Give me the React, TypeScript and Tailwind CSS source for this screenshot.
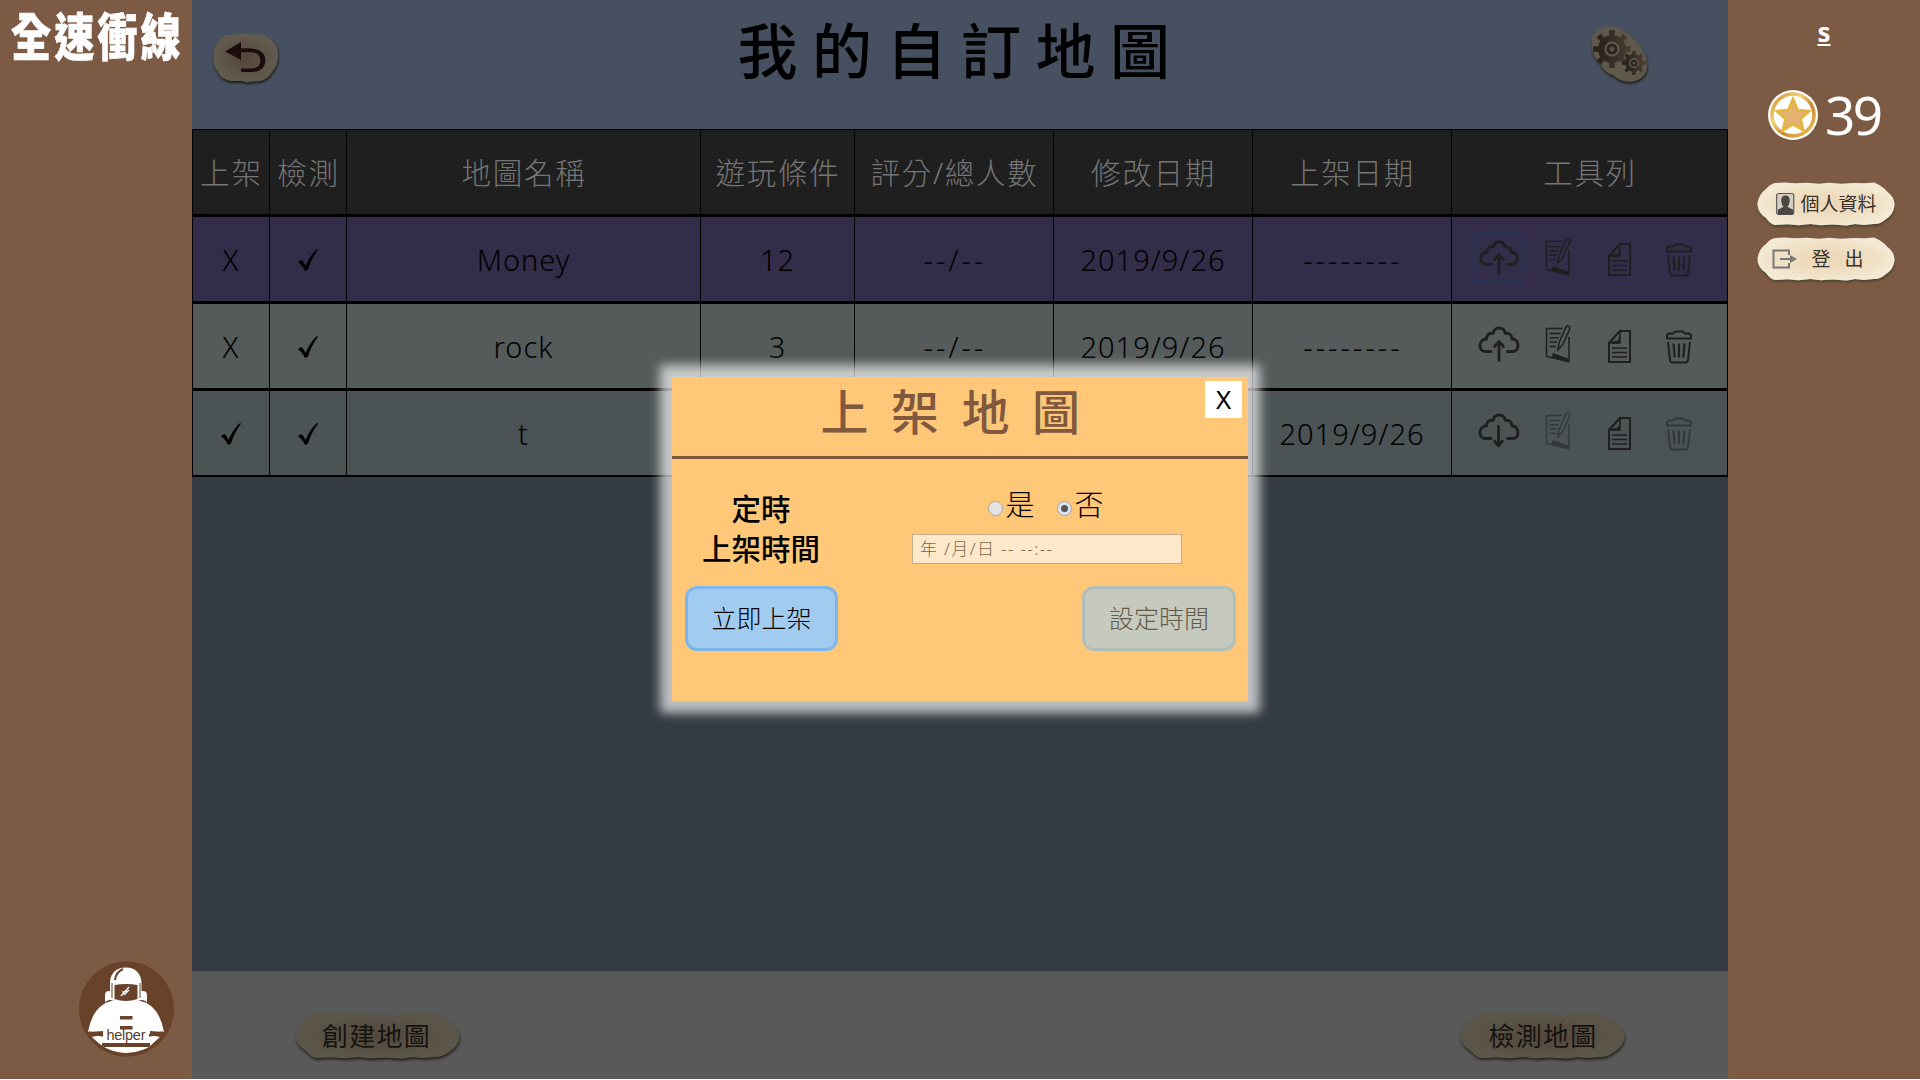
import React from "react";

const CJK = "font-['Noto_Sans','Noto_Sans_CJK_TC',sans-serif]";

function Cloud({ down }: { down?: boolean }) {
  return (
    <svg viewBox="0 0 48 48" className="size-12" fill="none" stroke="#1f1f1f" strokeWidth="2.9" strokeLinecap="round" strokeLinejoin="round">
      <path d="M16 29.500H11a5.500 5.500 0 0 1-6-6c0-4 3-6.500 6.500-6.500 0-5 4-6.500 6.500-5.500 1-4 3.500-5.500 6-5.500s5.500 1.500 6.500 5.500c4-1 6.500 2 6.500 5.500 4 0 6 3 6 6.500 0 4-2.500 6-5.500 6h-5" />
      {down ? (
        <path d="M23.500 17v18M19.500 32l4 5 4-5" strokeWidth="2.700" />
      ) : (
        <path d="M24 38.500V21M19.500 24.500l4.500-5 4.500 5" strokeWidth="2.700" />
      )}
    </svg>
  );
}

function Edit() {
  return (
    <svg viewBox="0 0 28 40" className="h-10 w-7" fill="none" stroke="#1f1f1f">
      <path d="M18.500 4.500H2.500V32.500L25 37.500V13" strokeWidth="1.500" />
      <path d="M9 29l16 6v3.500L7.500 33.500z" fill="#1f1f1f" stroke="none" />
      <path d="M5.500 9.500h11M5.500 13.800h9M5.500 18h7.500M5.500 22.500h6.500" strokeWidth="1.500" />
      <path d="M14 25.500l1-6.500 7-16q1.700-2 3.700 0v2L18.500 21z" strokeWidth="1.500" />
    </svg>
  );
}

function Doc() {
  return (
    <svg viewBox="0 0 24 36" className="h-9 w-6" fill="none" stroke="#1f1f1f" strokeWidth="2">
      <path d="M12 2h10v31H1V14z" />
      <path d="M12 2v12H1z" strokeWidth="1.500" />
      <path d="M12 5v9.500H4v-2l6-1z" fill="#1f1f1f" stroke="none" />
      <path d="M4 19h15M4 23.500h15M4 28h15" strokeWidth="1.500" />
    </svg>
  );
}

function Trash() {
  return (
    <svg viewBox="0 0 28 36" className="h-9 w-7" fill="none" stroke="#1f1f1f" strokeWidth="2" strokeLinejoin="round">
      <path d="M2 9.500V7q0-2.500 3-2.500h3.500L10 2.500h8l1.500 2H23q3 0 3 2.500v2.500z" />
      <path d="M3 13l2 18q.300 2.500 2.500 2.500h13q2.200 0 2.500-2.500l2-18" />
      <path d="M8.500 14.500l1.200 14M14 14.500v14M19.500 14.500l-1.200 14" strokeWidth="2.200" />
    </svg>
  );
}

const Check = () => (
  <svg viewBox="0 0 22 24" className="h-6 w-[22px]">
    <path d="M1 14.500q2.500-3.500 4.500-1.500 1.500 1.500 3 5Q13 7 20 1l1 .700Q14.500 10 11 21.500L8 23Q5 16.500 1 14.500z" fill="#000" />
  </svg>
);

function Pill({ w, h, dark, children }: { w: string; h: string; dark?: boolean; children: React.ReactNode }) {
  return (
    <div className={`relative flex items-center justify-center ${w} ${h}`}>
      <svg viewBox="0 0 138 44" preserveAspectRatio="none" className="absolute inset-0 size-full overflow-visible">
        <defs>
          <radialGradient id={dark ? "pd" : "pl"}>
            <stop offset="0" stopColor={dark ? "#53493e" : "#ecd6b4"} />
            <stop offset=".75" stopColor={dark ? "#5a5246" : "#f0e1c6"} />
            <stop offset="1" stopColor={dark ? "#5b554a" : "#f3e9d4"} />
          </radialGradient>
          <filter id={dark ? "sd" : "sl"} x="-10%" y="-20%" width="120%" height="150%">
            <feDropShadow dx="0.500" dy="2" stdDeviation="1" floodColor={dark ? "#1e1c12" : "#45432a"} floodOpacity="0.900" />
          </filter>
        </defs>
        <path
          filter={dark ? "url(#sd)" : "url(#sl)"}
          fill={dark ? "url(#pd)" : "url(#pl)"}
          d="M18 1l10-.500 10 .800 12-.500 12 .900 10-.900 12 1 13-.800 11 .300 9-.800q8 3 13 9 8 6 7.500 14-1 9-9 14-6 5-12 4.500l-10 1-8-1-9 1.500-14-1-12 .800-10-1.200-12 1.200-11-1-12 .800Q14 43 9 36 0 30 .500 21 2 12 9 7q4-5 9-6z"
        />
      </svg>
      <div className="relative flex items-center">{children}</div>
    </div>
  );
}

function gear(cx: number, cy: number, r: number) {
  const pts: string[] = [];
  for (let i = 0; i < 8; i++) {
    for (const [o, k] of [[-0.2, 1], [0.2, 1], [0.24, 0.74], [0.5, 0.74], [0.76, 0.74]]) {
      const a = ((i + o) / 8) * Math.PI * 2 - Math.PI / 2;
      pts.push(`${(cx + Math.cos(a) * r * k).toFixed(1)} ${(cy + Math.sin(a) * r * k).toFixed(1)}`);
    }
  }
  return "M" + pts.join("L") + "z";
}

const cols = "grid grid-cols-[77px_77px_354px_154px_199px_199px_199px_276px]";
const heads = ["上架", "檢測", "地圖名稱", "遊玩條件", "評分/總人數", "修改日期", "上架日期", "工具列"];
const rows = [
  { on: false, name: "Money", cond: "12", score: "--/--", mod: "2019/9/26", pub: "--------", bg: "bg-[#332d4a]", line: "h-[87px] border-b-[3px]" },
  { on: false, name: "rock", cond: "3", score: "--/--", mod: "2019/9/26", pub: "--------", bg: "bg-[#555a5a]", line: "h-[87px] border-b-[3px]" },
  { on: true, name: "t", cond: "", score: "", mod: "", pub: "2019/9/26", bg: "bg-[#4b5354]", line: "h-[86px] border-b-2" },
];

function Cell({ children, dashed }: { children: React.ReactNode; dashed?: boolean }) {
  return (
    <div className={`flex items-center justify-center border-r border-black pt-px ${dashed ? "pl-[2px] tracking-[3.100px]" : ""}`}>{children}</div>
  );
}

export default function App() {
  return (
    <div className={`relative flex h-[1080px] w-[1920px] flex-col overflow-hidden bg-white ${CJK}`}>
      <div className="flex h-[1079px]">
        <aside className="flex w-[192px] shrink-0 flex-col justify-between bg-[#7d5a44]">
          <div className="origin-center scale-y-[1.28] whitespace-nowrap pl-[11px] pt-[7px] text-[40px] font-black leading-[58px] tracking-[3.200px] text-white [-webkit-text-stroke:0.500px_white]">全速衝線</div>
          <svg viewBox="0 0 96 96" className="mb-[22px] ml-[78px] size-24">
            <circle cx="48.500" cy="48" r="47.500" fill="#68432a" />
            <clipPath id="hc"><circle cx="48.500" cy="47" r="45" /></clipPath>
            <g clipPath="url(#hc)">
              <rect x="27" y="30" width="10" height="13" rx="4" fill="#fff" />
              <rect x="59" y="30" width="10" height="13" rx="4" fill="#fff" />
              <path d="M10 71Q15 42 38 39h20q23 3 28 32l-14-1v4l10 2-10 9v9H24v-9l-11-9 12-2v-4z" fill="#fff" />
              <path d="M28 41l9-3M68 41l-9-3" stroke="#68432a" strokeWidth="1.500" />
              <path d="M32 39V21Q33 7 48 6.500 62 7 63.500 21v18q-15 3-31.500 0z" fill="#fff" />
              <path d="M36.500 24q11.500-2 23 0v14q-11.500 4-23 0z" fill="#68432a" />
              <path d="M37 19q1-8 8-11" stroke="#68432a" strokeWidth="2" fill="none" />
              <path d="M34 22v15M62 22v15" stroke="#68432a" strokeWidth="1" />
              <path d="M43 35l8-9M44 31l6-1M46 34l5-5" stroke="#fff" strokeWidth="1.200" />
              <path d="M42 55h12.500v3.500H42zM42 65h12.500v3.500H42z" fill="#68432a" />
              <path d="M24 82h48v4H24z" fill="#68432a" />
              <path d="M11 71.500l14 3M85 71.500l-14 3" stroke="#68432a" strokeWidth="2.500" />
            </g>
            <text x="48" y="79" textAnchor="middle" fontSize="14.500" fontFamily="Liberation Sans" fill="#5b3d28" textLength="39">helper</text>
          </svg>
        </aside>

        <main className="flex w-[1536px] shrink-0 flex-col bg-[#343a43]">
          <header className="flex h-[129px] shrink-0 items-start bg-[#475060]">
            <div className="ml-[21px] mt-[34px] w-[65px]">
              <svg viewBox="0 0 65 50" className="h-[50px] w-[65px] overflow-visible">
                <defs>
                  <radialGradient id="bk"><stop offset="0" stopColor="#53473a" /><stop offset="1" stopColor="#625c50" /></radialGradient>
                  <filter id="bs" x="-10%" y="-10%" width="120%" height="130%"><feDropShadow dx="0.500" dy="2" stdDeviation="1" floodColor="#1d1c12" /></filter>
                </defs>
                <path filter="url(#bs)" fill="url(#bk)" d="M14 1q18-2 36 0 6 1 9 6 6 4 6 14t-6 17q-4 7-12 9l-10 .500-3 1-4-1.500H18Q9 46 5 38 0 32 .500 22T6 7q3-5 8-6z" />
                <path d="M12 17.500L28 8v6.500q24-2 24.500 12Q52 38 38 38H28.500q-1.500-1.800 0-3.600H38q9 0 9.500-8-.500-8.500-11-8.200H28V26z" fill="#1e0c0c" />
              </svg>
            </div>
            <h1 className="flex-1 pl-[53px] text-center text-[60px] font-medium leading-[102px] tracking-[14.500px] text-black">我的自訂地圖</h1>
            <div className="mr-[79px] mt-[25px] w-[58px]">
              <svg viewBox="0 0 58 60" className="h-[60px] w-[58px] overflow-visible">
                <defs>
                  <linearGradient id="gr"><stop offset=".2" stopColor="#2a241f" /><stop offset="1" stopColor="#4b3f33" /></linearGradient>
                </defs>
                <path filter="url(#bs)" fill="#5f594c" d="M2 10Q9 1 20 1q12 2 22 12 14 13 14 28 0 11-12 15-12 3-22-6Q13 48 10 39 1 31 1 21 0 14 2 10z" />
                <path d={gear(21, 24, 19)} fill="url(#gr)" />
                <circle cx="21" cy="24" r="7.500" fill="#625a4d" />
                <circle cx="21" cy="24" r="5.500" fill="#2b241e" />
                <circle cx="21" cy="24" r="2.500" fill="#5a5448" />
                <path d={gear(43, 38, 12)} fill="url(#gr)" />
                <circle cx="43" cy="38" r="5" fill="#625a4d" />
                <circle cx="43" cy="38" r="3.500" fill="#2b241e" />
                <circle cx="43" cy="38" r="1.500" fill="#5a5448" />
              </svg>
            </div>
          </header>

          <section className="h-[348px] shrink-0 border-l border-t border-black">
            <div className={`${cols} h-[87px] border-b-[3px] border-black bg-[#1f1f1f] text-[29.500px] font-light tracking-[1.700px] text-[#757575]`}>
              {heads.map((h) => <Cell key={h}><span className="pl-px pt-px">{h}</span></Cell>)}
            </div>
            {rows.map((r, i) => (
              <div key={i} className={`${cols} ${r.bg} ${r.line} border-black text-[29px] font-light tracking-[1px] text-black`}>
                <Cell>{r.on ? <Check /> : "X"}</Cell>
                <Cell><Check /></Cell>
                <Cell>{r.name}</Cell>
                <Cell>{r.cond}</Cell>
                <Cell dashed>{r.score}</Cell>
                <Cell>{r.mod}</Cell>
                <Cell dashed={!r.on}>{r.pub}</Cell>
                <div className="flex items-start border-r border-black pl-[22px] pt-[17px]">
                  <div className={`flex size-[50px] items-center justify-center ${i === 0 ? "border-2 border-[#273559]" : ""}`}><Cloud down={r.on} /></div>
                  <div className={`ml-[20px] mt-[3px] ${r.on ? "opacity-50" : ""}`}><Edit /></div>
                  <div className="ml-[36px] mt-[8px]"><Doc /></div>
                  <div className={`ml-[33px] mt-[8px] ${r.on ? "opacity-50" : ""}`}><Trash /></div>
                </div>
              </div>
            ))}
          </section>

          <div className="flex-1" />
          <footer className="flex h-[108px] items-start justify-between bg-[#595959] px-[103px] pt-[42px]">
            <Pill w="w-[165px]" h="h-[46px]" dark><span className="-ml-px mr-px text-[26px] leading-none tracking-[1.300px] text-[#16130f]">創建地圖</span></Pill>
            <Pill w="w-[165px]" h="h-[46px]" dark><span className="ml-px text-[26px] leading-none tracking-[1.300px] text-[#16130f]">檢測地圖</span></Pill>
          </footer>
        </main>

        <aside className="flex w-[192px] shrink-0 flex-col items-center bg-[#7d5a44] text-white">
          <div className="mt-[16px] text-[26px] font-bold leading-[32px] underline decoration-2 underline-offset-2">s</div>
          <div className="mt-[34px] flex h-[66px] items-center self-start pl-[40px]">
            <svg viewBox="0 0 50 50" className="size-[50px]">
              <defs><linearGradient id="gold" x2="1" y2="1"><stop stopColor="#d08b35" /><stop offset=".35" stopColor="#f3d36e" /><stop offset=".6" stopColor="#c98a35" /><stop offset="1" stopColor="#eac552" /></linearGradient></defs>
              <circle cx="25" cy="25" r="25" fill="#fff" />
              <circle cx="25" cy="25" r="21" fill="none" stroke="url(#gold)" strokeWidth="3.500" />
              <path d="M25 9l4.800 11L41.500 21l-8.800 8 2.600 11.500L25 34.500l-10.300 6L17.300 29l-8.800-8 11.700-1z" fill="#e3b170" stroke="#e5b73a" strokeWidth="2.500" />
            </svg>
            <span className="ml-[7px] text-[53px] leading-[66px] tracking-[-2.500px]">39</span>
          </div>
          <div className="mt-[34px] flex flex-col gap-[11px] pl-[3px]">
            <Pill w="w-[138px]" h="h-[44px]">
              <svg viewBox="0 0 20 24" className="ml-[2px] h-6 w-[19px]"><rect x=".7" y="1" width="18" height="22" rx="2" fill="#d5cdbd" stroke="#555" strokeWidth="1.200" /><path d="M10 3q5 0 4.500 6-.500 4-2.500 6l6 3v5H2v-5l6-3q-2-2-2.500-6Q5 3 10 3z" fill="#4a4743" /></svg>
              <span className="ml-[5px] whitespace-nowrap text-[19px] leading-none text-[#3a3128]">個人資料</span>
            </Pill>
            <Pill w="w-[138px]" h="h-[44px]">
              <svg viewBox="0 0 26 20" className="ml-px mr-[13px] h-5 w-[26px]" fill="none" stroke="#777" strokeWidth="2"><path d="M17 6V1.500H1.500v17H17V14" /><path d="M8 10h12" /><path d="M18 6l7 4-7 4z" fill="#777" stroke="none" /></svg>
              <span className="mr-[16px] whitespace-nowrap text-[19px] leading-none text-[#3a3128]"><span className="mr-[14px]">登</span>出</span>
            </Pill>
          </div>
        </aside>
      </div>

      <div className="absolute left-[672px] top-[377px] flex h-[324px] w-[576px] flex-col bg-[#ffc778] shadow-[0_0_10px_12px_rgba(255,255,255,0.680)]">
        <div className="relative h-[82px] border-b-[3px] border-[#80593a]">
          <h2 className="pl-[3px] text-center text-[48px] font-medium leading-[70px] tracking-[22.500px] text-[#80593f]">上架地圖</h2>
          <button className="absolute right-[6px] top-[4px] flex size-[37px] items-center justify-center bg-white text-[26px] text-black">X</button>
        </div>
        <div className="mt-[30px] flex h-[81px]">
          <div className="w-[178px] text-center text-[29.500px] font-medium leading-[40px] text-black">
            <div>定時</div>
            <div>上架時間</div>
          </div>
          <div className="flex flex-1 flex-col items-center pr-[4px] text-[29px] font-light text-black">
            <div className="flex h-[45px] items-start gap-[22px] leading-[32px]">
              <label className="flex"><span className="mr-[2px] mt-[12px] size-[15px] rounded-full border border-[#aaa] bg-[#e4e4e4]" />是</label>
              <label className="mr-[2px] flex"><span className="mr-[3px] mt-[12px] flex size-[15px] items-center justify-center rounded-full border border-[#a5a5a5] bg-[#dde5ee]"><span className="size-[7px] rounded-full bg-[#555]" /></span>否</label>
            </div>
            <div className="flex h-[30px] w-[270px] items-center whitespace-pre border border-[#c5ae8e] bg-[#ffe8ca] pl-[7px] text-[17px] tracking-[1.350px] text-[#7a6849]">年 /月/日 -- --:--</div>
          </div>
        </div>
        <div className="mt-[16px] flex justify-between pl-[13px] pr-[12px]">
          <button className="h-[65px] w-[153px] rounded-xl border-[3px] border-[#7eb6ea] bg-[#a2cbf0] pt-px text-[25px] font-light text-black">立即上架</button>
          <button className="h-[65px] w-[154px] rounded-xl border-[3px] border-[#b1bfb9] bg-[#c6c9bd] pt-px text-[25px] font-light text-[#625b4a]">設定時間</button>
        </div>
      </div>
    </div>
  );
}
